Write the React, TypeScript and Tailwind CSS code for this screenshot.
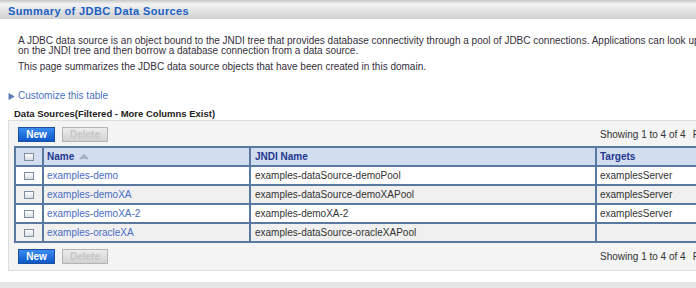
import React from "react";

interface DataSourceRow {
  name: string;
  jndi: string;
  target: string;
}

const rows: DataSourceRow[] = [
  { name: "examples-demo", jndi: "examples-dataSource-demoPool", target: "examplesServer" },
  { name: "examples-demoXA", jndi: "examples-dataSource-demoXAPool", target: "examplesServer" },
  { name: "examples-demoXA-2", jndi: "examples-demoXA-2", target: "examplesServer" },
  { name: "examples-oracleXA", jndi: "examples-dataSource-oracleXAPool", target: "" },
];

function Checkbox() {
  return (
    <span className="mx-auto block h-[8px] w-[10px] border border-[#7f8ea3] bg-gradient-to-b from-white to-[#d9dde3]" />
  );
}

function SortIcon() {
  return (
    <svg viewBox="0 0 10 7" className="ml-[5px] inline-block h-[7px] w-[10px]" aria-hidden="true">
      <path d="M1 6 L5 2 L9 6" fill="none" stroke="#9aa6b8" strokeWidth="1.4" />
      <path d="M3 6 L5 4 L7 6" fill="none" stroke="#9aa6b8" strokeWidth="1.2" />
    </svg>
  );
}

function Toolbar() {
  return (
    <div className="flex h-[15px] items-center">
      <div className="flex w-[582px] items-center gap-[7px]">
        <button
          type="button"
          className="flex h-[15px] w-[37px] items-center justify-center border border-[#1b4f9c] bg-gradient-to-b from-[#3a8cf0] to-[#0b58c9] text-[10px] font-bold text-white"
        >
          New
        </button>
        <button
          type="button"
          disabled
          className="flex h-[15px] w-[46px] items-center justify-center border border-[#b4b4b4] bg-gradient-to-b from-[#ececec] to-[#d2d2d2] text-[10px] font-bold text-[#c6c6c6]"
        >
          Delete
        </button>
      </div>
      <span className="whitespace-nowrap text-[10px] text-[#333]">Showing 1 to 4 of 4</span>
      <span className="ml-[7px] whitespace-nowrap text-[10px] text-[#333]">Previous | Next</span>
    </div>
  );
}

export default function App() {
  return (
    <div className="h-[288px] w-[696px] overflow-hidden bg-white font-['Liberation_Sans',Arial,sans-serif] leading-[10px]">
      {/* page title bar */}
      <div className="flex h-[19px] items-center bg-[linear-gradient(to_bottom,#c6c6c6_0px,#f3f3f3_4px,#d0d0d0_19px)] pl-[8px] pt-[2px]">
        <h1 className="text-[11px] font-bold tracking-[0.4px] text-[#1a5fc4]">Summary of JDBC Data Sources</h1>
      </div>

      <div className="pl-[18px] pt-[17px] text-[10px] leading-[10px] text-[#352f3b]">
        <p className="whitespace-nowrap">
          A JDBC data source is an object bound to the JNDI tree that provides database connectivity through a pool of
          JDBC connections. Applications can look up a
          <br />
          on the JNDI tree and then borrow a database connection from a data source.
        </p>
        <p className="mt-[6px]">This page summarizes the JDBC data source objects that have been created in this domain.</p>
      </div>

      <div className="mt-[19px] flex items-center pl-[8px] text-[10px] text-[#4a72c4]">
        <svg viewBox="0 0 7 8" className="mr-[3px] h-[7px] w-[7px]" aria-hidden="true">
          <path d="M0.5 0.5 L6.5 4 L0.5 7.5 Z" fill="#5b7fc0" stroke="#3e5f9e" strokeWidth="0.6" />
        </svg>
        <span>Customize this table</span>
      </div>

      <div className="mt-[8px] pl-[14px] text-[9.5px] font-bold text-[#222]">Data Sources(Filtered - More Columns Exist)</div>

      <div className="ml-[8px] mt-[1px] w-[760px] border border-[#dcdcdc] bg-[#f4f4f4] pb-[6px] pl-[5px] pt-[6px]">
        <div className="pl-[4px]">
          <Toolbar />
        </div>

        <table className="mt-[4px] table-fixed border-collapse text-[10px]">
          <colgroup>
            <col className="w-[28px]" />
            <col className="w-[207px]" />
            <col className="w-[346px]" />
            <col className="w-[160px]" />
          </colgroup>
          <thead>
            <tr className="h-[19px] bg-[#d2deef] text-left font-bold text-[#24378f]">
              <th className="border-2 border-[#5a79a0] p-0">
                <Checkbox />
              </th>
              <th className="border-2 border-[#5a79a0] py-0 pl-[3px]">
                <span className="flex items-center">
                  Name
                  <SortIcon />
                </span>
              </th>
              <th className="border-2 border-[#5a79a0] py-0 pl-[4px]">JNDI Name</th>
              <th className="border-2 border-[#5a79a0] py-0 pl-[3px]">Targets</th>
            </tr>
          </thead>
          <tbody>
            {rows.map((row, i) => (
              <tr key={row.name} className={i % 2 === 1 ? "h-[19px] bg-[#f0f0f0]" : "h-[19px] bg-white"}>
                <td className="border-2 border-[#5a79a0] p-0">
                  <Checkbox />
                </td>
                <td className="border-2 border-[#5a79a0] py-0 pl-[3px] text-[#4a6cc2]">{row.name}</td>
                <td className="border-2 border-[#5a79a0] py-0 pl-[4px] text-[#333]">{row.jndi}</td>
                <td className="border-2 border-[#5a79a0] py-0 pl-[3px] text-[#333]">{row.target}</td>
              </tr>
            ))}
          </tbody>
        </table>

        <div className="mt-[6px] pl-[4px]">
          <Toolbar />
        </div>
      </div>

      <div className="mt-[11px] h-[8px] bg-[#e5e5e5]" />
    </div>
  );
}
